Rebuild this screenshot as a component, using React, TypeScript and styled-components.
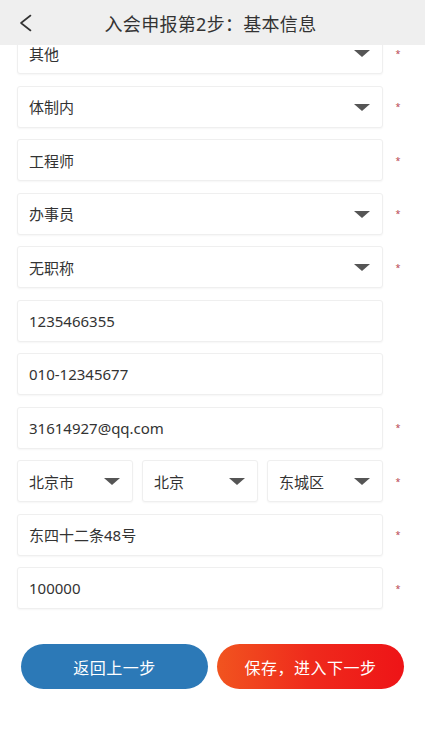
import React from 'react';
import styled, { createGlobalStyle } from 'styled-components';

const GlobalStyle = createGlobalStyle`
  html, body {
    margin: 0;
    padding: 0;
    background: #fff;
  }
  body {
    font-family: "Noto Sans", "Noto Sans CJK SC", sans-serif;
    color: #333;
  }
`;

type Field = {
  value: string;
  select?: boolean;
  required?: boolean;
};

const fields: Field[] = [
  { value: '其他', select: true, required: true },
  { value: '体制内', select: true, required: true },
  { value: '工程师', required: true },
  { value: '办事员', select: true, required: true },
  { value: '无职称', select: true, required: true },
  { value: '1235466355' },
  { value: '010-12345677' },
  { value: '31614927@qq.com', required: true },
];

const tailFields: Field[] = [
  { value: '东四十二条48号', required: true },
  { value: '100000', required: true },
];

const regions = ['北京市', '北京', '东城区'];

const Page = styled.div`
  width: 425px;
  min-height: 731px;
  background: #fff;
`;

// header is pinned over the scrolled form
const Header = styled.header`
  position: fixed;
  top: 0;
  left: 0;
  right: 0;
  height: 45px;
  background: #efefef;
  display: flex;
  align-items: center;
  justify-content: center;
  z-index: 10;
`;

const BackButton = styled.button`
  position: absolute;
  left: 14px;
  top: 10px;
  width: 24px;
  height: 26px;
  padding: 0;
  border: none;
  background: none;
  display: flex;
  align-items: center;
  justify-content: center;
`;

const Title = styled.h1`
  margin: 0 0 0 -4px;
  font-size: 18px;
  font-weight: 400;
  color: #333;
  letter-spacing: 0.3px;
`;

const Form = styled.div`
  display: flex;
  flex-direction: column;
  gap: 11.5px;
  padding: 32px 12px 0 17px;
`;

const Row = styled.div`
  display: flex;
  align-items: center;
`;

const Controls = styled.div`
  flex: 1;
  display: flex;
  gap: 9px;
`;

const Box = styled.div`
  flex: 1;
  height: 42px;
  box-sizing: border-box;
  display: flex;
  align-items: center;
  justify-content: space-between;
  padding: 0 12px 0 11px;
  background: #fff;
  border: 1px solid #efefef;
  border-radius: 3px;
  box-shadow: 0 1px 2px rgba(0, 0, 0, 0.04);
  font-size: 15px;
  color: #333;
  white-space: nowrap;
`;

const Arrow = styled.span`
  width: 0;
  height: 0;
  border-left: 8px solid transparent;
  border-right: 8px solid transparent;
  border-top: 7px solid #555;
  margin-top: 1px;
`;

const Required = styled.span<{ $show: boolean }>`
  width: 30px;
  flex: none;
  text-align: center;
  font-size: 9px;
  line-height: 1;
  color: #b8434d;
  visibility: ${(p) => (p.$show ? 'visible' : 'hidden')};
`;

const Actions = styled.div`
  display: flex;
  gap: 9px;
  padding: 35px 21px 0 21px;
`;

const ActionButton = styled.button<{ $primary?: boolean }>`
  flex: 1;
  height: 45px;
  border: none;
  border-radius: 23px;
  font-family: inherit;
  font-size: 16px;
  color: #fff;
  letter-spacing: 0.5px;
  background: ${(p) =>
    p.$primary
      ? 'linear-gradient(90deg, #f1541f 0%, #ef2a1c 50%, #ee1417 100%)'
      : '#2c79b7'};
`;

const FieldBox: React.FC<{ field: Field }> = ({ field }) => (
  <Box>
    <span>{field.value}</span>
    {field.select && <Arrow />}
  </Box>
);

const FieldRow: React.FC<{ field: Field }> = ({ field }) => (
  <Row>
    <Controls>
      <FieldBox field={field} />
    </Controls>
    <Required $show={!!field.required}>*</Required>
  </Row>
);

export default function App() {
  return (
    <Page>
      <GlobalStyle />
      <Header>
        <BackButton aria-label="返回">
          <svg width="14" height="18" viewBox="0 0 14 18" fill="none">
            <polyline
              points="11.5,1.5 2,9 11.5,16.5"
              stroke="#333"
              strokeWidth="1.6"
              strokeLinecap="round"
              strokeLinejoin="round"
            />
          </svg>
        </BackButton>
        <Title>入会申报第2步：基本信息</Title>
      </Header>
      <Form>
        {fields.map((f) => (
          <FieldRow key={f.value} field={f} />
        ))}
        <Row>
          <Controls>
            {regions.map((r) => (
              <FieldBox key={r} field={{ value: r, select: true }} />
            ))}
          </Controls>
          <Required $show>*</Required>
        </Row>
        {tailFields.map((f) => (
          <FieldRow key={f.value} field={f} />
        ))}
      </Form>
      <Actions>
        <ActionButton>返回上一步</ActionButton>
        <ActionButton $primary>保存，进入下一步</ActionButton>
      </Actions>
    </Page>
  );
}
